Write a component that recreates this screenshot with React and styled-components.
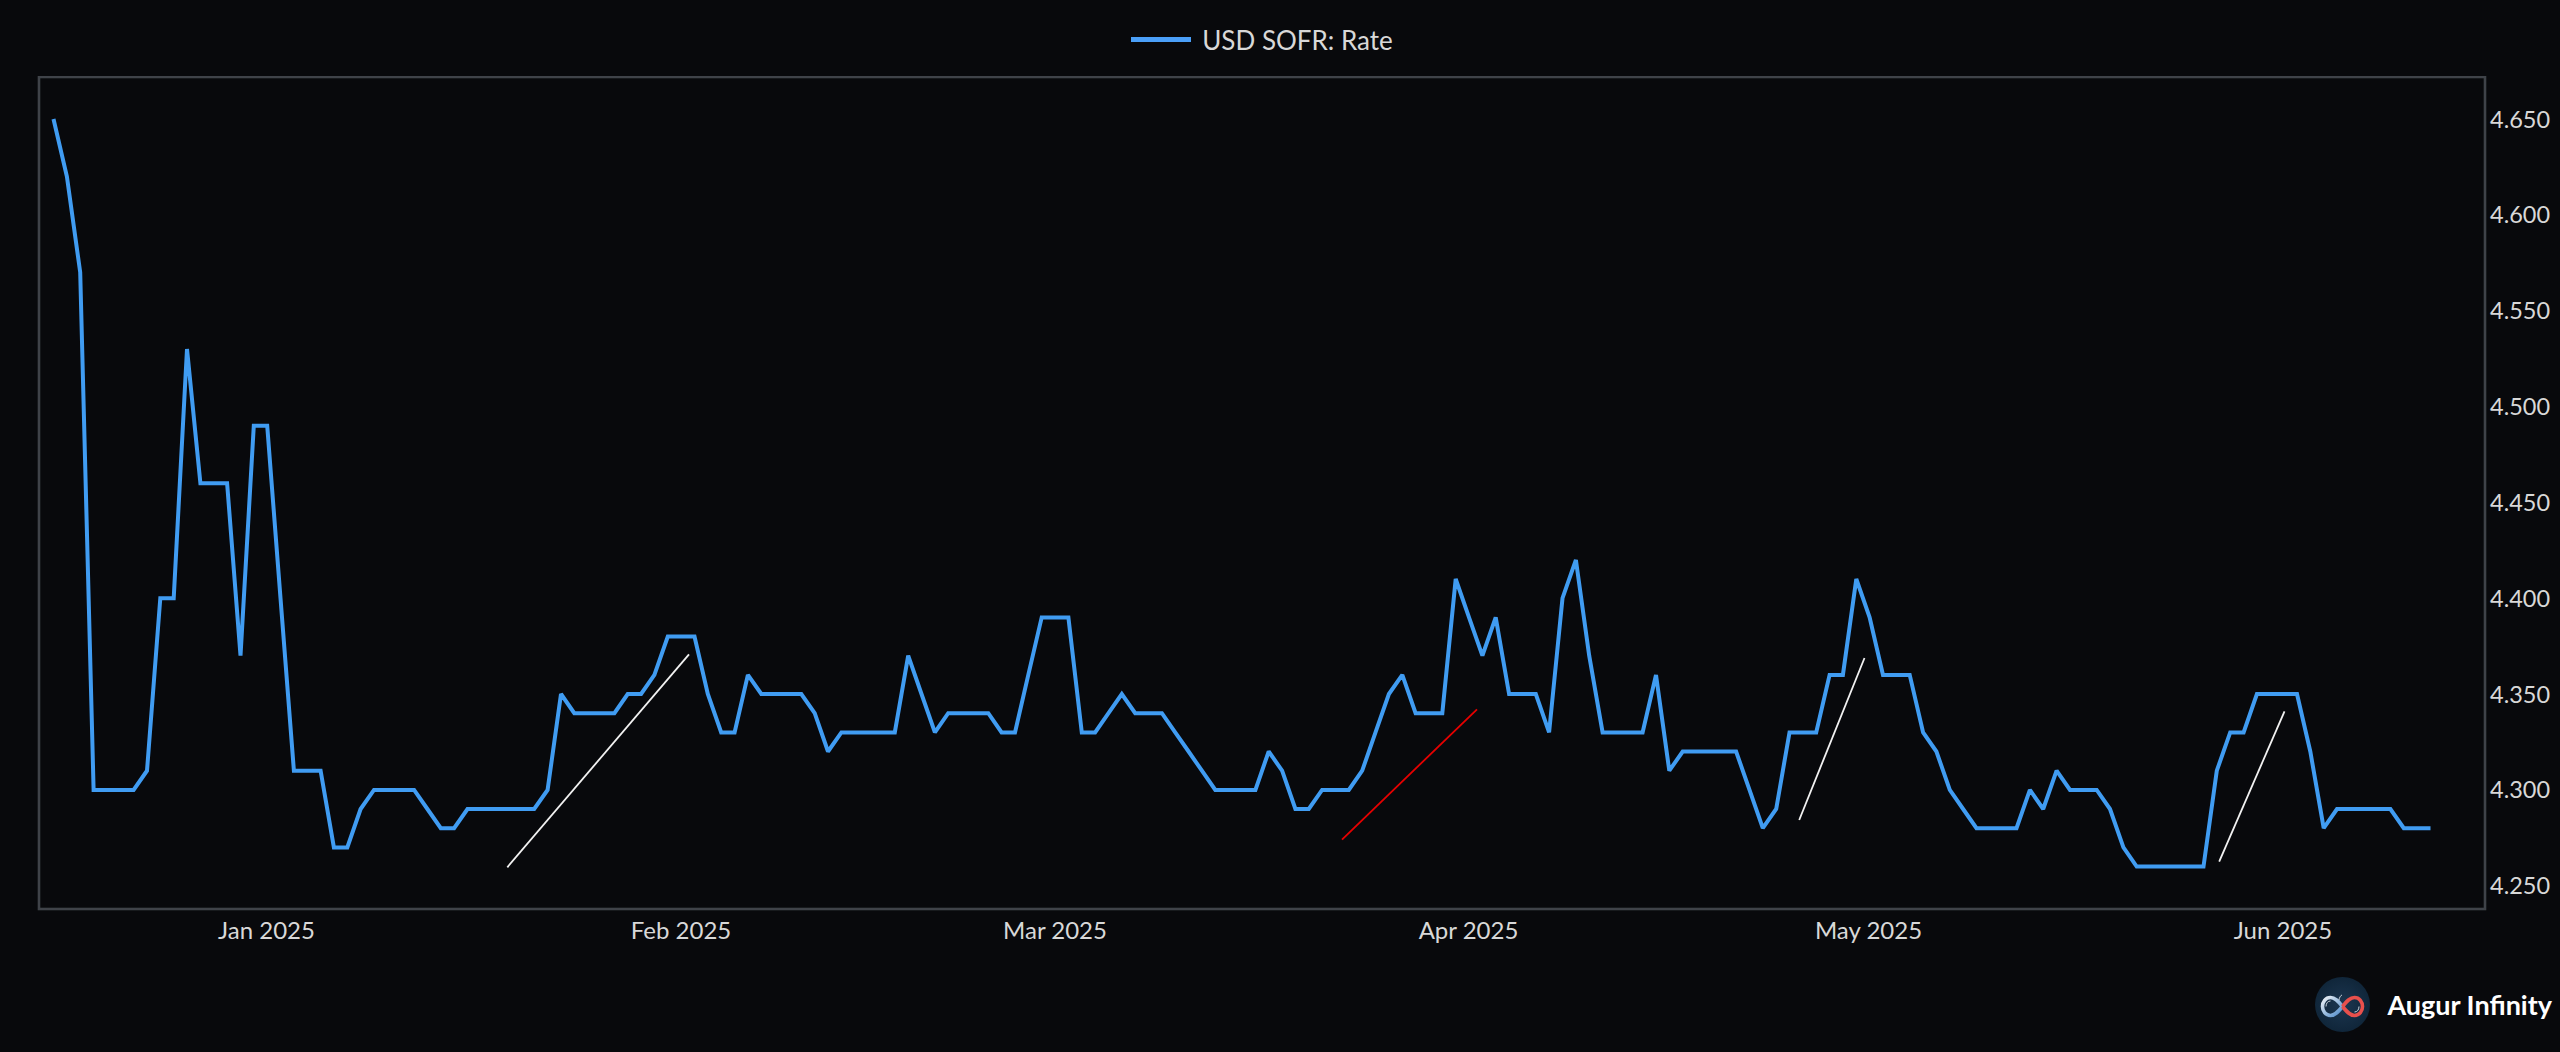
import React from "react";
import styled, { createGlobalStyle } from "styled-components";

const GlobalStyle = createGlobalStyle`
    html, body {
        margin: 0;
        padding: 0;
        background: #08090c;
    }
`;

const Page = styled.div`
    width: 2560px;
    height: 1052px;
    display: flex;
    flex-direction: column;
    overflow: hidden;
    background: #08090c;
    font-family: Lato, "Open Sans", sans-serif;
    color: #d8d8d8;
`;

const Legend = styled.div`
    height: 76px;
    box-sizing: border-box;
    padding: 3px 36px 0 0;
    display: flex;
    align-items: center;
    justify-content: center;
    gap: 11px;
    font-size: 26px;
`;

const LegendLine = styled.span`
    width: 60px;
    height: 5px;
    background: #4a9ff8;
`;

const ChartSvg = styled.svg`
    display: block;
    flex: none;
`;

const AxisLabel = styled.text`
    font-family: Lato, "Open Sans", sans-serif;
    font-size: ${(props) => props.$size}px;
    fill: #d8d8d8;
`;

const Footer = styled.div`
    flex: 1;
    box-sizing: border-box;
    padding: 6px 8px 0 0;
    display: flex;
    align-items: center;
    justify-content: flex-end;
    gap: 17px;
`;

const BrandName = styled.span`
    font-family: Lato, "Open Sans", sans-serif;
    font-size: 27px;
    font-weight: 700;
    color: #ffffff;
    white-space: nowrap;
`;

// rate in hundredths, one value per calendar day from mid december
const rates = [
    465, 462, 457, 430, 430, 430, 430, 431, 440, 440, 453, 446, 446, 446, 437,
    449, 449, 440, 431, 431, 431, 427, 427, 429, 430, 430, 430, 430, 429, 428,
    428, 429, 429, 429, 429, 429, 429, 430, 435, 434, 434, 434, 434, 435, 435,
    436, 438, 438, 438, 435, 433, 433, 436, 435, 435, 435, 435, 434, 432, 433,
    433, 433, 433, 433, 437, 435, 433, 434, 434, 434, 434, 433, 433, 436, 439,
    439, 439, 433, 433, 434, 435, 434, 434, 434, 433, 432, 431, 430, 430, 430,
    430, 432, 431, 429, 429, 430, 430, 430, 431, 433, 435, 436, 434, 434, 434,
    441, 439, 437, 439, 435, 435, 435, 433, 440, 442, 437, 433, 433, 433, 433,
    436, 431, 432, 432, 432, 432, 432, 430, 428, 429, 433, 433, 433, 436, 436,
    441, 439, 436, 436, 436, 433, 432, 430, 429, 428, 428, 428, 428, 430, 429,
    431, 430, 430, 430, 429, 427, 426, 426, 426, 426, 426, 426, 431, 433, 433,
    435, 435, 435, 435, 432, 428, 429, 429, 429, 429, 429, 428, 428, 428,
];

const yForRate = (rate) => 119 + (465 - rate) * 19.168;
const xForDay = (day) => 53.5 + day * 13.354;

const ratePoints = rates
    .map((rate, day) => `${xForDay(day).toFixed(1)},${yForRate(rate).toFixed(1)}`)
    .join(" ");

const yTicks = [465, 460, 455, 450, 445, 440, 435, 430, 425];

const xTicks = [
    { label: "Jan 2025", x: 266.5 },
    { label: "Feb 2025", x: 681 },
    { label: "Mar 2025", x: 1055 },
    { label: "Apr 2025", x: 1468.5 },
    { label: "May 2025", x: 1868.5 },
    { label: "Jun 2025", x: 2283 },
];

const trendLines = [
    { x1: 507.3, y1: 867.3, x2: 689, y2: 654.3, color: "#f2f2f2" },
    { x1: 1342, y1: 839.7, x2: 1477, y2: 709.3, color: "#e60000" },
    { x1: 1799.2, y1: 820, x2: 1864.5, y2: 658, color: "#f2f2f2" },
    { x1: 2219.2, y1: 861.7, x2: 2284.5, y2: 711.3, color: "#f2f2f2" },
];

const BrandLogo = () => (
    <svg width="55" height="55" viewBox="0 0 55 55">
        <defs>
            <radialGradient id="badge" cx="50%" cy="50%" r="50%">
                <stop offset="0%" stopColor="#1c3650" />
                <stop offset="100%" stopColor="#10263a" />
            </radialGradient>
            <linearGradient id="loopLeft" x1="0" y1="0" x2="1" y2="1">
                <stop offset="0%" stopColor="#f0f3f6" />
                <stop offset="100%" stopColor="#4a88c8" />
            </linearGradient>
        </defs>
        <circle cx="27.5" cy="27.5" r="27.5" fill="url(#badge)" />
        <path
            d="M27.5 29.5 C23 24 20 20.5 15.5 20.5 C10.5 20.5 7.5 25 7.5 29.5 C7.5 34 10.5 38.5 15.5 38.5 C20 38.5 23 35 27.5 29.5"
            fill="none"
            stroke="url(#loopLeft)"
            strokeWidth="3.6"
        />
        <path
            d="M27.5 29.5 C32 24 35 20.5 39.5 20.5 C44.5 20.5 47.5 25 47.5 29.5 C47.5 34 44.5 38.5 39.5 38.5 C35 38.5 32 35 27.5 29.5"
            fill="none"
            stroke="#e8504c"
            strokeWidth="3.6"
        />
        <path
            d="M24 23 C24 21 26 18 27 18 M11 29.5 C11 26 13 24 15.5 24 M44 29.5 C44 33 42 35 39.5 35"
            fill="none"
            stroke="#c9d3dc"
            strokeWidth="1"
        />
    </svg>
);

const App = () => {
    return (
        <Page>
            <GlobalStyle />
            <Legend>
                <LegendLine />
                <span>USD SOFR: Rate</span>
            </Legend>
            <ChartSvg width="2560" height="874" viewBox="0 76 2560 874">
                <rect
                    x="39"
                    y="77"
                    width="2446"
                    height="832"
                    fill="none"
                    stroke="#3f4349"
                    strokeWidth="2.6"
                />
                <polyline
                    points={ratePoints}
                    fill="none"
                    stroke="#409cf2"
                    strokeWidth="4"
                    strokeLinejoin="miter"
                    strokeMiterlimit="2"
                />
                {trendLines.map((line, index) => (
                    <line
                        key={index}
                        x1={line.x1}
                        y1={line.y1}
                        x2={line.x2}
                        y2={line.y2}
                        stroke={line.color}
                        strokeWidth="1.8"
                    />
                ))}
                {yTicks.map((tick) => (
                    <AxisLabel key={tick} $size={23.5} x="2490" y={yForRate(tick) + 8.5}>
                        {(tick / 100).toFixed(3)}
                    </AxisLabel>
                ))}
                {xTicks.map((tick) => (
                    <AxisLabel
                        key={tick.label}
                        $size={24}
                        x={tick.x}
                        y="938.5"
                        textAnchor="middle"
                    >
                        {tick.label}
                    </AxisLabel>
                ))}
            </ChartSvg>
            <Footer>
                <BrandLogo />
                <BrandName>Augur Infinity</BrandName>
            </Footer>
        </Page>
    );
};

export default App;
